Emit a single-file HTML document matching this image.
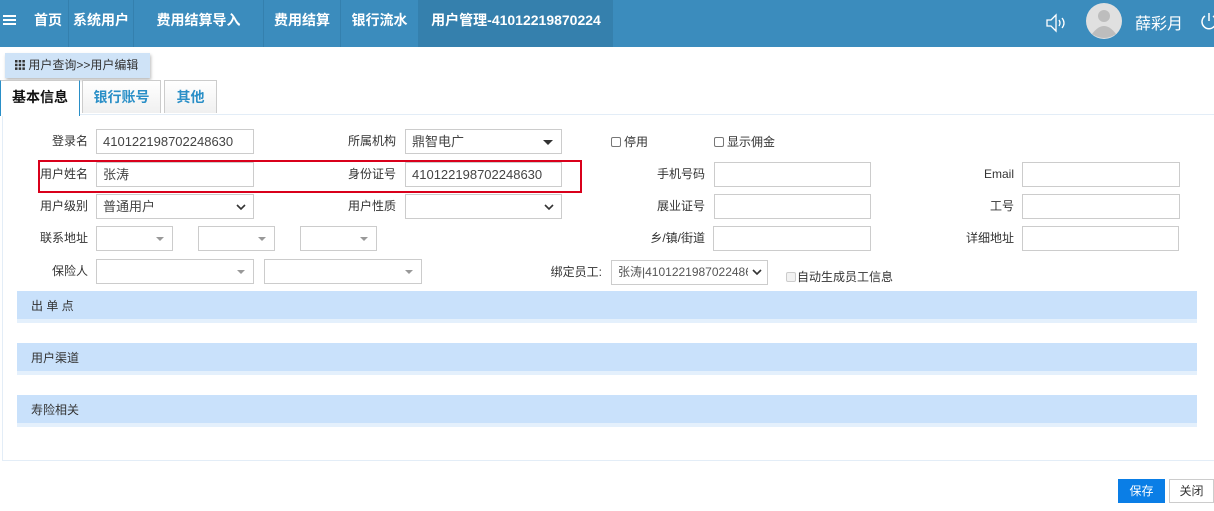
<!DOCTYPE html>
<html><head><meta charset="utf-8"><style>
*{margin:0;padding:0;box-sizing:border-box}
body{width:1214px;height:511px;overflow:hidden;background:#fff;font-family:"Liberation Sans","Noto Sans CJK SC",sans-serif;font-size:12px;color:#333;position:relative}
.a{position:absolute}
.nav{left:0;top:0;width:1214px;height:47px;background:#3b8cbd}
.ni{top:0;height:47px;line-height:40px;color:#fff;font-weight:bold;font-size:14px;text-align:center;border-right:1px solid #3480ae}
.inp{border:1px solid #ccc;height:25px;background:#fff;line-height:23px;padding-left:6px;font-size:13px;color:#444}
.lb{text-align:right;font-size:12px;color:#333;line-height:25px}
.car{position:absolute;right:8px;top:10px;width:0;height:0;border-left:4px solid transparent;border-right:4px solid transparent;border-top:4px solid #999}
.chev{position:absolute;right:6px;top:6px}
.sec{left:17px;width:1180px;height:32px;background:#c9e1fb;border-bottom:4px solid #e4f0fc;line-height:30px;padding-left:14px;font-size:12px;color:#333}
.tab{top:80px;height:33px;border:1px solid #ccc;border-bottom:none;background:linear-gradient(#fff,#f0f0f0);text-align:center;line-height:32px;font-size:14px;color:#2a8fc7;font-weight:bold}
.cb{display:inline-block;width:10px;height:10px;border:1px solid #777;border-radius:2px;vertical-align:-1px;margin-right:3px}
</style></head><body>
<div class="a nav"></div>
<svg class="a" style="left:3px;top:13px" width="13" height="14"><rect y="2" width="13" height="2" fill="#fff"/><rect y="6" width="13" height="2" fill="#fff"/><rect y="10" width="13" height="2" fill="#fff"/></svg>
<div class="a ni" style="left:28px;width:41px">首页</div>
<div class="a ni" style="left:69px;width:65px">系统用户</div>
<div class="a ni" style="left:134px;width:130px">费用结算导入</div>
<div class="a ni" style="left:264px;width:77px">费用结算</div>
<div class="a ni" style="left:341px;width:78px">银行流水</div>
<div class="a ni" style="left:419px;width:194px;background:#3580ad;border-right:none">用户管理-41012219870224</div>
<svg class="a" style="left:1045px;top:12px" width="24" height="22" fill="none" stroke="#fff" stroke-width="1.3"><path d="M2 8h4l5-5v16l-5-5H2z"/><path d="M14 8q2 3 0 6M17 6q4 5 0 10"/></svg>
<svg class="a" style="left:1086px;top:3px" width="36" height="36"><circle cx="18" cy="18" r="18" fill="#e0e0e0"/><circle cx="18" cy="13" r="6" fill="#bdbdbd"/><path d="M6 31q12-16 24 0q-12 8-24 0z" fill="#bdbdbd"/></svg>
<div class="a" style="left:1135px;top:10px;color:#fff;font-size:16px">薛彩月</div>
<svg class="a" style="left:1200px;top:11px" width="14" height="20" fill="none" stroke="#fff" stroke-width="1.5"><path d="M5 5a7 7 0 1 0 8 0"/><path d="M9 2v8"/></svg>

<div class="a" style="left:5px;top:53px;width:145px;height:25px;background:#cfe3f7;box-shadow:1px 2px 3px #bbb;line-height:24px;font-size:12px;padding-left:10px;color:#333;white-space:nowrap">
<svg width="10" height="10" style="vertical-align:-1px"><g fill="#333"><rect x="0" y="0" width="2.5" height="2.5"/><rect x="3.7" y="0" width="2.5" height="2.5"/><rect x="7.4" y="0" width="2.5" height="2.5"/><rect x="0" y="3.7" width="2.5" height="2.5"/><rect x="3.7" y="3.7" width="2.5" height="2.5"/><rect x="7.4" y="3.7" width="2.5" height="2.5"/><rect x="0" y="7.4" width="2.5" height="2.5"/><rect x="3.7" y="7.4" width="2.5" height="2.5"/><rect x="7.4" y="7.4" width="2.5" height="2.5"/></g></svg> 用户查询&gt;&gt;用户编辑</div>

<div class="a" style="left:2px;top:114px;width:1212px;height:347px;border:1px solid #e3edf7;border-right:none"></div>
<div class="a tab" style="left:0;width:80px;background:#fff;color:#111;border-color:#ccc;border-left:1px solid #2a8fc7;border-right:1px solid #2a8fc7;height:36px">基本信息</div>
<div class="a tab" style="left:82px;width:79px">银行账号</div>
<div class="a tab" style="left:164px;width:53px">其他</div>

<div class="a lb" style="left:20px;top:129px;width:68px">登录名</div>
<div class="a inp" style="left:96px;top:129px;width:158px">410122198702248630</div>
<div class="a lb" style="left:320px;top:129px;width:76px">所属机构</div>
<div class="a inp" style="left:405px;top:129px;width:157px">鼎智电广<span class="car" style="top:10px;border-left-width:5px;border-right-width:5px;border-top:5px solid #333"></span></div>
<div class="a" style="left:611px;top:133px;font-size:12px"><span class="cb"></span>停用</div>
<div class="a" style="left:714px;top:133px;font-size:12px"><span class="cb"></span>显示佣金</div>

<div class="a lb" style="left:20px;top:162px;width:68px">用户姓名</div>
<div class="a inp" style="left:96px;top:162px;width:158px">张涛</div>
<div class="a lb" style="left:320px;top:162px;width:76px">身份证号</div>
<div class="a inp" style="left:405px;top:162px;width:157px">410122198702248630</div>
<div class="a lb" style="left:620px;top:162px;width:85px">手机号码</div>
<div class="a inp" style="left:714px;top:162px;width:157px"></div>
<div class="a lb" style="left:930px;top:162px;width:84px">Email</div>
<div class="a inp" style="left:1022px;top:162px;width:158px"></div>
<div class="a" style="left:38px;top:160px;width:544px;height:33px;border:2px solid #d9001b"></div>

<div class="a lb" style="left:20px;top:194px;width:68px">用户级别</div>
<div class="a inp" style="left:96px;top:194px;width:158px">普通用户<svg class="chev" width="12" height="12"><path d="M2 4l4 4 4-4" fill="none" stroke="#333" stroke-width="1.6"/></svg></div>
<div class="a lb" style="left:320px;top:194px;width:76px">用户性质</div>
<div class="a inp" style="left:405px;top:194px;width:157px"><svg class="chev" width="12" height="12"><path d="M2 4l4 4 4-4" fill="none" stroke="#333" stroke-width="1.6"/></svg></div>
<div class="a lb" style="left:620px;top:194px;width:85px">展业证号</div>
<div class="a inp" style="left:714px;top:194px;width:157px"></div>
<div class="a lb" style="left:930px;top:194px;width:84px">工号</div>
<div class="a inp" style="left:1022px;top:194px;width:158px"></div>

<div class="a lb" style="left:20px;top:226px;width:68px">联系地址</div>
<div class="a inp" style="left:96px;top:226px;width:77px"><span class="car"></span></div>
<div class="a inp" style="left:198px;top:226px;width:77px"><span class="car"></span></div>
<div class="a inp" style="left:300px;top:226px;width:77px"><span class="car"></span></div>
<div class="a lb" style="left:620px;top:226px;width:85px">乡/镇/街道</div>
<div class="a inp" style="left:713px;top:226px;width:158px"></div>
<div class="a lb" style="left:930px;top:226px;width:84px">详细地址</div>
<div class="a inp" style="left:1022px;top:226px;width:157px"></div>

<div class="a lb" style="left:20px;top:259px;width:68px">保险人</div>
<div class="a inp" style="left:96px;top:259px;width:158px"><span class="car"></span></div>
<div class="a inp" style="left:264px;top:259px;width:158px"><span class="car"></span></div>
<div class="a lb" style="left:500px;top:260px;width:102px">绑定员工:</div>
<div class="a inp" style="left:611px;top:260px;width:157px;font-size:12px;color:#555;overflow:hidden;white-space:nowrap">张涛|410122198702248630<svg class="chev" width="18" height="14" style="background:#fff;right:1px;top:4px"><path d="M5 5l4 4 4-4" fill="none" stroke="#333" stroke-width="1.6"/></svg></div>
<div class="a" style="left:786px;top:268px;font-size:12px"><span class="cb" style="border-color:#ccc;background:#f2f2f2;margin-right:1px"></span>自动生成员工信息</div>

<div class="a sec" style="top:291px">出 单 点</div>
<div class="a sec" style="top:343px">用户渠道</div>
<div class="a sec" style="top:395px">寿险相关</div>

<div class="a" style="left:1118px;top:479px;width:47px;height:24px;background:#0a7ee6;color:#fff;text-align:center;line-height:24px;font-size:12px">保存</div>
<div class="a" style="left:1169px;top:479px;width:45px;height:24px;border:1px solid #ccc;text-align:center;line-height:22px;font-size:12px">关闭</div>
</body></html>
